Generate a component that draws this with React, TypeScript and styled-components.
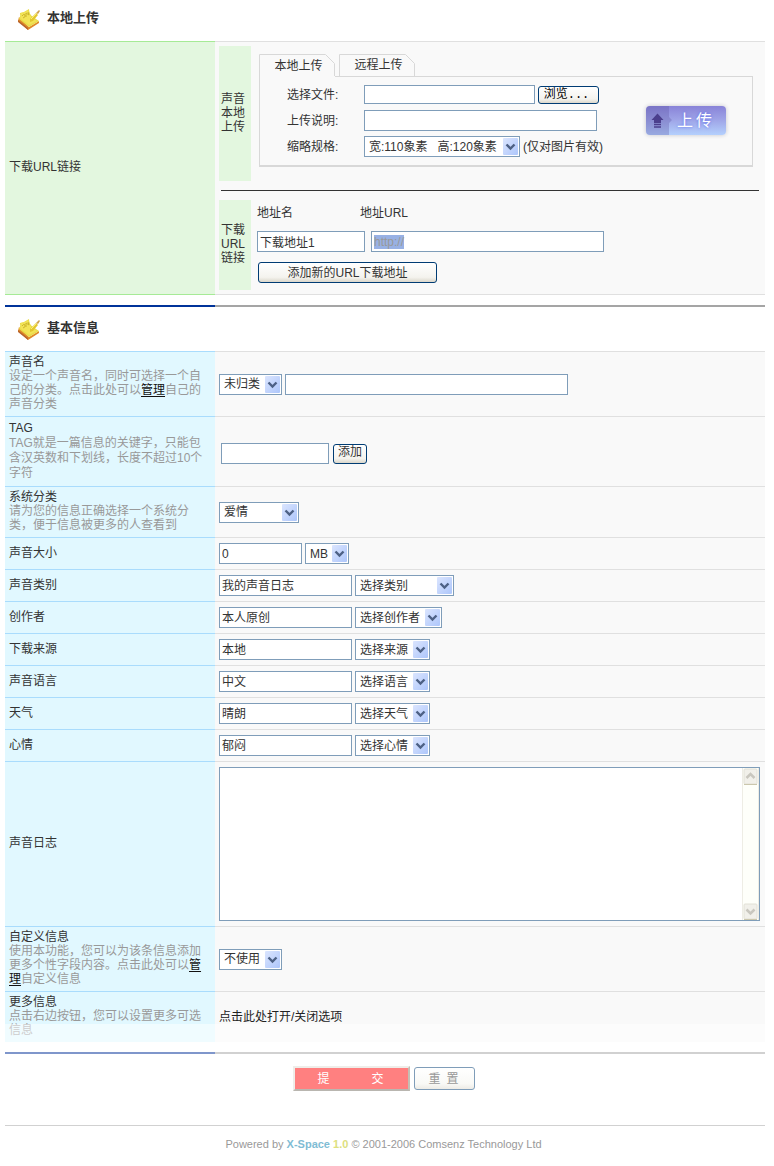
import React, { useEffect, useRef } from "react";
import styled, { createGlobalStyle, css } from "styled-components";

const GlobalStyle = createGlobalStyle`
  * { box-sizing: border-box; }
  body {
    margin: 0;
    background: #fff;
    color: #333;
    font: 12px/14px "Liberation Sans", "Noto Sans CJK SC", sans-serif;
  }
  button, input, select, textarea { font: inherit; color: inherit; margin: 0; }
`;

const Page = styled.form`
  padding: 0 9px 12px 5px;
`;

const SectionHeader = styled.header`
  display: flex;
  align-items: flex-start;
  gap: 7px;
  padding: 9px 0 11px 12px;
`;

const SectionTitle = styled.h2`
  margin: 0;
  font-size: 13px;
  line-height: 18px;
  font-weight: bold;
`;

type Tone = "green" | "blue";

const tones = {
  green: { fill: "#e3f7df", line: "#a6ea96" },
  blue: { fill: "#e1f8ff", line: "#a9dcfd" },
};

const Row = styled.div`
  position: relative;
  display: grid;
  grid-template-columns: 210px minmax(0, 1fr);
`;

const LabelCell = styled.div<{ $tone: Tone; $closed?: boolean }>`
  display: flex;
  flex-direction: column;
  justify-content: center;
  padding: 0 4px 2px;
  background: ${(p) => tones[p.$tone].fill};
  border-top: 1px solid ${(p) => tones[p.$tone].line};
  ${(p) => p.$closed && css`border-bottom: 1px solid ${tones[p.$tone].line};`}
`;

const FieldCell = styled.div<{ $closed?: boolean; $height?: number }>`
  display: flex;
  align-items: center;
  gap: 3px;
  min-height: ${(p) => p.$height ?? 32}px;
  padding: 0 5px 0 4px;
  background: #f9f9f9;
  border-top: 1px solid #e0e0e0;
  ${(p) => p.$closed && css`border-bottom: 1px solid #e0e0e0;`}
`;

const Hint = styled.p<{ $loose?: boolean }>`
  margin: 0;
  color: #999;
  line-height: ${(p) => (p.$loose ? 15 : 14)}px;
`;

const HintLink = styled.a`
  color: #111;
  text-decoration: underline;
  text-underline-offset: 2px;
`;

const FadedEdge = styled.span`
  position: absolute;
  left: 0;
  right: 0;
  bottom: 0;
  height: 18px;
  background: rgba(255, 255, 255, 0.5);
  pointer-events: none;
`;

const Rule = styled.div<{ $faded?: boolean }>`
  display: grid;
  grid-template-columns: 210px 1fr;
  height: 2px;
  margin: 10px 0 3px;
  &::before { content: ""; background: ${(p) => (p.$faded ? "#7f96cb" : "#003399")}; }
  &::after { content: ""; background: ${(p) => (p.$faded ? "#d1d1d1" : "#a5a5a5")}; }
`;

const TextBox = styled.input<{ $width: number; $short?: boolean }>`
  width: ${(p) => p.$width}px;
  height: ${(p) => (p.$short ? 19 : 21)}px;
  padding: 0 2px;
  border: 1px solid #7f9db9;
  border-radius: 0;
  background: #fff;
  outline: none;
  &::selection { background: #98b1e4; color: #999; }
`;

const DetailBox = styled(TextBox)`
  padding-bottom: 3px;
`;

const SelectFrame = styled.span<{ $width: number }>`
  position: relative;
  display: block;
  width: ${(p) => p.$width}px;
  height: 21px;
`;

const SelectBox = styled.select`
  appearance: none;
  display: block;
  width: 100%;
  height: 21px;
  padding: 0 18px 0 4px;
  border: 1px solid #7f9db9;
  border-radius: 0;
  background: #fff;
  outline: none;
`;

const SelectArrow = styled.svg`
  position: absolute;
  top: 2px;
  right: 2px;
  pointer-events: none;
`;

const PushButton = styled.button<{ $width: number; $height: number }>`
  width: ${(p) => p.$width}px;
  height: ${(p) => p.$height}px;
  padding: 0;
  border: 1px solid #003c74;
  border-radius: 3px;
  background: linear-gradient(#fff, #f4f3ee 75%, #dbd7cb);
  line-height: 14px;
`;

const AddTagButton = styled(PushButton)`
  padding-bottom: 3px;
`;

const BrowseButton = styled(PushButton)`
  padding-right: 4px;
  color: #000;
  font-family: "Liberation Mono", "Noto Sans CJK SC", monospace;
`;

const UploadLayout = styled.div`
  flex: 1;
  min-width: 0;
  padding: 4px 0;
`;

const UploadBlock = styled.div`
  display: flex;
`;

const SideLabel = styled.div<{ $height: number }>`
  flex: none;
  display: flex;
  align-items: center;
  width: 32px;
  min-height: ${(p) => p.$height}px;
  padding: 0 2px 2px;
  background: #e3f7df;
`;

const Divider = styled.hr`
  height: 1px;
  margin: 9px 1px 9px 2px;
  border: 0;
  background: #333;
`;

const UploadPanel = styled.div`
  flex: 1;
  min-width: 0;
  padding: 8px 7px 0 8px;
`;

const TabList = styled.div`
  display: flex;
  gap: 4px;
`;

const Tab = styled.button<{ $active?: boolean }>`
  position: relative;
  width: 76px;
  height: ${(p) => (p.$active ? 23 : 22)}px;
  margin-bottom: ${(p) => (p.$active ? -1 : 0)}px;
  padding: 0 0 0 3px;
  border: 0;
  background: ${(p) => (p.$active ? "#f9f9f9" : "transparent")};
  line-height: 22px;
`;

const TabOutline = styled.svg`
  position: absolute;
  top: 0;
  left: 0;
  pointer-events: none;
`;

const PanelBody = styled.div`
  display: flex;
  align-items: center;
  justify-content: space-between;
  padding: 7px 26px 8px 27px;
  border: 1px solid #d8d8d8;
  border-bottom-width: 2px;
`;

const UploadFields = styled.div`
  display: grid;
  grid-template-columns: 77px auto;
  grid-auto-rows: 21px;
  row-gap: 5px;
  align-items: center;
`;

const Inline = styled.div<{ $gap: number }>`
  display: flex;
  align-items: center;
  gap: ${(p) => p.$gap}px;
`;

const UploadButton = styled.button`
  display: flex;
  align-items: center;
  width: 80px;
  height: 29px;
  padding: 0;
  overflow: hidden;
  border: 0;
  border-radius: 4px;
  background: linear-gradient(#8983d8, #9da2e6 45%, #b4d0fd);
  box-shadow: 0 0 4px #c4c4cc;
  color: #fff;
  font-size: 16px;
  line-height: 29px;
  text-shadow: 0 0 3px #5a6cf0;
`;

const UploadText = styled.span`
  display: flex;
  gap: 3px;
  padding-left: 4px;
`;

const UrlFields = styled.div`
  display: grid;
  grid-template-columns: 103px auto;
  align-content: start;
  padding: 6px 0 0 6px;
`;

const UrlInputs = styled(Inline)`
  grid-column: 1 / -1;
  margin: 11px 0 10px;
`;

const AddUrlButton = styled(PushButton)`
  grid-column: 1 / -1;
  margin-left: 1px;
`;

const TagFields = styled(Inline)`
  padding: 4px 0 0 2px;
`;

const TagLabel = styled.label`
  line-height: 15px;
`;

const JournalFrame = styled.div`
  display: flex;
  flex: 1;
  min-width: 0;
  height: 154px;
  border: 1px solid #7f9db9;
  background: #fff;
`;

const Journal = styled.textarea`
  flex: 1;
  min-width: 0;
  padding: 2px;
  border: 0;
  outline: none;
  resize: none;
  background: transparent;
`;

const ScrollTrack = styled.div`
  display: flex;
  flex-direction: column;
  justify-content: space-between;
  width: 17px;
  border-left: 1px solid #eeede5;
  border-right: 1px solid #eeede5;
  background: #fefffa;
`;

const PlainButton = styled.button`
  padding: 0;
  border: 0;
  background: none;
  color: #222;
`;

const Actions = styled.div`
  display: flex;
  justify-content: center;
  align-items: center;
  gap: 4px;
  padding: 9px 2px 34px 0;
`;

const SubmitButton = styled.button`
  display: flex;
  justify-content: center;
  align-items: center;
  gap: 42px;
  width: 117px;
  height: 25px;
  padding: 0 2px 0 0;
  border: 2px solid;
  border-color: #efede9 #c4beb4 #b9b6b0 #efede9;
  background: #ff8080;
  color: #fff;
`;

const ResetButton = styled(PushButton)`
  display: flex;
  justify-content: center;
  align-items: center;
  gap: 6px;
  padding-right: 2px;
  border-color: #7f9db9;
  background: linear-gradient(#fff, #f9f9f6 75%, #edebe5);
  color: #999;
`;

const Footer = styled.footer`
  padding: 11px 3px 0 0;
  border-top: 1px solid #d1d1d1;
  color: #999;
  font-size: 11px;
  text-align: center;
`;

const Product = styled.a`
  color: #7fbcd4;
  font-weight: bold;
  text-decoration: none;
`;

const Version = styled.strong`
  color: #dde07e;
`;

function NoteIcon() {
  return (
    <svg width="23" height="21" viewBox="0 0 23 21" aria-hidden="true">
      <path d="M2 8 L1 12 L11 21 L22 14 L22 12 L12 18 Z" fill="#e08a28" />
      <path d="M1 11 L11 19 L11 21 L1 13 Z" fill="#b9642a" />
      <path d="M3 4 Q8 3 12 0 Q12 5 16 8 L22 12 L12 18 L2 10 Q4 7 3 4 Z" fill="#e9dc48" />
      <path d="M4 4 Q8 4 11 1 Q12 6 15 9 L20 12 L12 16 L3 9 Q5 7 4 4 Z" fill="#f3e356" />
      <path d="M5 7 Q7 4 8 6 T6 9 M9 8 L9 4 L12 6 L11 3" fill="none" stroke="#cdb62c" />
      <path d="M13 13 L13 10 L19 4 L21 6 L16 12 Z" fill="#e4c62e" />
      <path d="M14 10 L20 4" stroke="#f9ee79" />
      <path d="M19 4 L22 1 L23 2 L21 5 Z" fill="#cfa352" />
    </svg>
  );
}

function UploadIcon() {
  return (
    <svg width="27" height="29" viewBox="0 0 27 29" aria-hidden="true">
      <path d="M0 0H23V11L26 14L23 17V29H0Z" fill="#5a52a0" fillOpacity=".3" />
      <path d="M11.500 7.500L17.500 14H15V17H8V14H5.500Z" fill="#4b3f8d" />
      <path d="M8 18.500H15M8 21H15" stroke="#4b3f8d" strokeWidth="1.500" />
    </svg>
  );
}

function ScrollArrow({ down }: { down?: boolean }) {
  return (
    <svg width="15" height="17" viewBox="0 0 15 17" aria-hidden="true">
      <rect x="1" y="1" width="13" height="15" rx="1" fill="#f1f0ea" stroke="#e2e0d6" />
      <path d="M1 16.500H14" stroke="#cbc7ad" />
      <path
        d={down ? "M3.500 6.500L7.500 10.500L11.500 6.500" : "M3.500 10L7.500 6L11.500 10"}
        fill="none"
        stroke="#c9c7bf"
        strokeWidth="2.500"
      />
    </svg>
  );
}

interface SelectProps {
  width: number;
  option: string;
  label: string;
  id?: string;
}

function Select({ width, option, label, id }: SelectProps) {
  return (
    <SelectFrame $width={width}>
      <SelectBox id={id} aria-label={label}>
        <option>{option}</option>
      </SelectBox>
      <SelectArrow width="15" height="17" viewBox="0 0 15 17" aria-hidden="true">
        <defs>
          <linearGradient id="arrowFill" x1="0" y1="0" x2="1" y2="1">
            <stop offset="0" stopColor="#dbe5fe" />
            <stop offset="1" stopColor="#adc6fb" />
          </linearGradient>
        </defs>
        <rect width="15" height="17" rx="1" fill="url(#arrowFill)" />
        <path d="M3.500 6.500L7.500 10.500L11.500 6.500" fill="none" stroke="#4d6185" strokeWidth="2.400" />
      </SelectArrow>
    </SelectFrame>
  );
}

function TabButton({ active, children }: { active?: boolean; children: React.ReactNode }) {
  return (
    <Tab type="button" role="tab" aria-selected={!!active} $active={active}>
      <TabOutline width="76" height="23" viewBox="0 0 76 23" aria-hidden="true">
        <path d="M66 0H76V10Z" fill="#f9f9f9" />
        <path d={`M.5 ${active ? 23 : 22}V.5H66.500L75.500 9.500V22`} fill="none" stroke="#d8d8d8" />
      </TabOutline>
      {children}
    </Tab>
  );
}

const detailRows = [
  { id: "kind", label: "声音类别", value: "我的声音日志", option: "选择类别", width: 99 },
  { id: "author", label: "创作者", value: "本人原创", option: "选择创作者", width: 87 },
  { id: "source", label: "下载来源", value: "本地", option: "选择来源", width: 75 },
  { id: "language", label: "声音语言", value: "中文", option: "选择语言", width: 75 },
  { id: "weather", label: "天气", value: "晴朗", option: "选择天气", width: 75 },
  { id: "mood", label: "心情", value: "郁闷", option: "选择心情", width: 75 },
];

export default function App() {
  const urlRef = useRef<HTMLInputElement>(null);

  useEffect(() => {
    urlRef.current?.focus({ preventScroll: true });
    urlRef.current?.select();
  }, []);

  return (
    <>
      <GlobalStyle />
      <Page onSubmit={(e) => e.preventDefault()}>
        <SectionHeader>
          <NoteIcon />
          <SectionTitle>本地上传</SectionTitle>
        </SectionHeader>
        <Row>
          <LabelCell $tone="green" $closed>下载URL链接</LabelCell>
          <FieldCell $closed>
            <UploadLayout>
              <UploadBlock>
                <SideLabel $height={135}>声音本地上传</SideLabel>
                <UploadPanel>
                  <TabList role="tablist">
                    <TabButton active>本地上传</TabButton>
                    <TabButton>远程上传</TabButton>
                  </TabList>
                  <PanelBody>
                    <UploadFields>
                      <label htmlFor="file">选择文件:</label>
                      <Inline $gap={3}>
                        <TextBox id="file" $width={171} $short />
                        <BrowseButton type="button" $width={61} $height={18}>浏览...</BrowseButton>
                      </Inline>
                      <label htmlFor="description">上传说明:</label>
                      <TextBox id="description" $width={233} />
                      <label htmlFor="thumb">缩略规格:</label>
                      <Inline $gap={3}>
                        <Select
                          id="thumb"
                          width={156}
                          label="缩略规格"
                          option={"宽:110象素\u00a0\u00a0\u00a0高:120象素"}
                        />
                        <span>(仅对图片有效)</span>
                      </Inline>
                    </UploadFields>
                    <UploadButton type="button">
                      <UploadIcon />
                      <UploadText><span>上</span><span>传</span></UploadText>
                    </UploadButton>
                  </PanelBody>
                </UploadPanel>
              </UploadBlock>
              <Divider />
              <UploadBlock>
                <SideLabel $height={90}>下载URL链接</SideLabel>
                <UrlFields>
                  <label htmlFor="urlName">地址名</label>
                  <label htmlFor="url">地址URL</label>
                  <UrlInputs $gap={6}>
                    <TextBox id="urlName" $width={108} defaultValue="下载地址1" />
                    <TextBox id="url" ref={urlRef} $width={233} defaultValue="http://" />
                  </UrlInputs>
                  <AddUrlButton type="button" $width={179} $height={21}>添加新的URL下载地址</AddUrlButton>
                </UrlFields>
              </UploadBlock>
            </UploadLayout>
          </FieldCell>
        </Row>

        <Rule />
        <SectionHeader>
          <NoteIcon />
          <SectionTitle>基本信息</SectionTitle>
        </SectionHeader>
        <Row>
          <LabelCell $tone="blue">
            <label htmlFor="name">声音名</label>
            <Hint>
              设定一个声音名，同时可选择一个自己的分类。点击此处可以<HintLink href="#categories">管理</HintLink>自己的声音分类
            </Hint>
          </LabelCell>
          <FieldCell $height={65}>
            <Select width={63} label="分类" option="未归类" />
            <TextBox id="name" aria-label="声音名" $width={283} />
          </FieldCell>
        </Row>
        <Row>
          <LabelCell $tone="blue">
            <TagLabel htmlFor="tag">TAG</TagLabel>
            <Hint $loose>TAG就是一篇信息的关键字，只能包含汉英数和下划线，长度不超过10个字符</Hint>
          </LabelCell>
          <FieldCell $height={70}>
            <TagFields $gap={4}>
              <TextBox id="tag" $width={108} />
              <AddTagButton type="button" $width={34} $height={20}>添加</AddTagButton>
            </TagFields>
          </FieldCell>
        </Row>
        <Row>
          <LabelCell $tone="blue">
            <label htmlFor="system">系统分类</label>
            <Hint>请为您的信息正确选择一个系统分类，便于信息被更多的人查看到</Hint>
          </LabelCell>
          <FieldCell $height={51}>
            <Select id="system" width={80} label="系统分类" option="爱情" />
          </FieldCell>
        </Row>
        <Row>
          <LabelCell $tone="blue"><label htmlFor="size">声音大小</label></LabelCell>
          <FieldCell>
            <TextBox id="size" $width={83} defaultValue="0" />
            <Select width={44} label="单位" option="MB" />
          </FieldCell>
        </Row>
        {detailRows.map((row) => (
          <Row key={row.id}>
            <LabelCell $tone="blue"><label htmlFor={row.id}>{row.label}</label></LabelCell>
            <FieldCell>
              <DetailBox id={row.id} $width={133} defaultValue={row.value} />
              <Select width={row.width} label={row.option} option={row.option} />
            </FieldCell>
          </Row>
        ))}
        <Row>
          <LabelCell $tone="blue"><label htmlFor="journal">声音日志</label></LabelCell>
          <FieldCell $height={165}>
            <JournalFrame>
              <Journal id="journal" />
              <ScrollTrack aria-hidden="true">
                <ScrollArrow />
                <ScrollArrow down />
              </ScrollTrack>
            </JournalFrame>
          </FieldCell>
        </Row>
        <Row>
          <LabelCell $tone="blue">
            <label htmlFor="custom">自定义信息</label>
            <Hint>
              使用本功能，您可以为该条信息添加更多个性字段内容。点击此处可以<HintLink href="#custom-fields">管理</HintLink>自定义信息
            </Hint>
          </LabelCell>
          <FieldCell $height={65}>
            <Select id="custom" width={63} label="自定义信息" option="不使用" />
          </FieldCell>
        </Row>
        <Row>
          <LabelCell $tone="blue">
            <span>更多信息</span>
            <Hint>点击右边按钮，您可以设置更多可选信息</Hint>
          </LabelCell>
          <FieldCell $height={51}>
            <PlainButton type="button">点击此处打开/关闭选项</PlainButton>
          </FieldCell>
          <FadedEdge />
        </Row>

        <Rule $faded />
        <Actions>
          <SubmitButton type="submit"><span>提</span><span>交</span></SubmitButton>
          <ResetButton type="reset" $width={61} $height={23}><span>重</span><span>置</span></ResetButton>
        </Actions>
        <Footer>
          Powered by <Product href="#x-space">X-Space</Product> <Version>1.0</Version> © 2001-2006 Comsenz
          Technology Ltd
        </Footer>
      </Page>
    </>
  );
}
